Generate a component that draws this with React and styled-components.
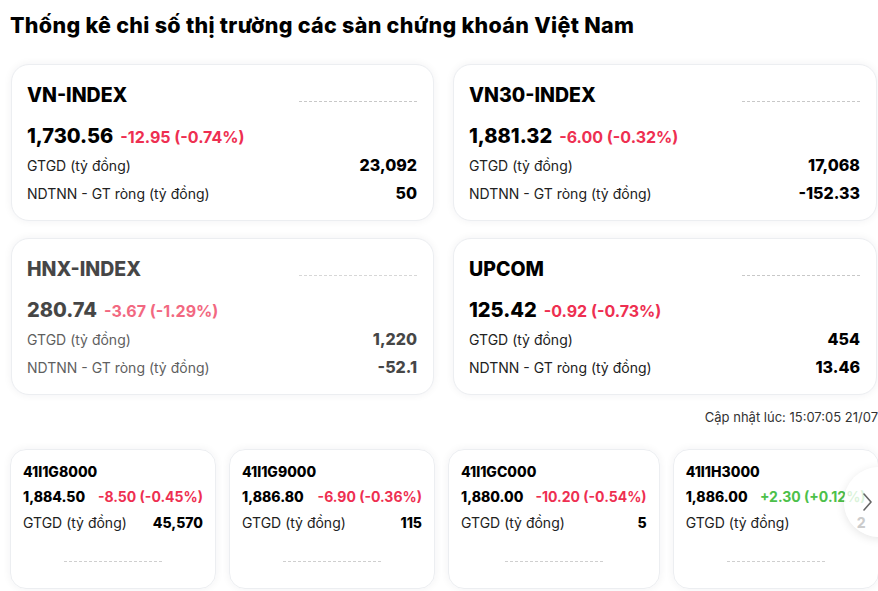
import React from 'react';
import styled, { createGlobalStyle } from 'styled-components';

const GlobalStyle = createGlobalStyle`
  body {
    margin: 0;
    background: #fff;
    font-family: Inter, "Noto Sans", sans-serif;
    color: #111;
  }
`;

const indexes = [
  { name: 'VN-INDEX', price: '1,730.56', change: '-12.95 (-0.74%)', gtgd: '23,092', ndtnn: '50' },
  { name: 'VN30-INDEX', price: '1,881.32', change: '-6.00 (-0.32%)', gtgd: '17,068', ndtnn: '-152.33' },
  { name: 'HNX-INDEX', price: '280.74', change: '-3.67 (-1.29%)', gtgd: '1,220', ndtnn: '-52.1', faded: true },
  { name: 'UPCOM', price: '125.42', change: '-0.92 (-0.73%)', gtgd: '454', ndtnn: '13.46' },
];

const futures = [
  { code: '41I1G8000', price: '1,884.50', change: '-8.50 (-0.45%)', gtgd: '45,570' },
  { code: '41I1G9000', price: '1,886.80', change: '-6.90 (-0.36%)', gtgd: '115' },
  { code: '41I1GC000', price: '1,880.00', change: '-10.20 (-0.54%)', gtgd: '5' },
  { code: '41I1H3000', price: '1,886.00', change: '+2.30 (+0.12%)', gtgd: '2', up: true },
];

export default function App() {
  return (
    <Page>
      <GlobalStyle />
      <Title>Thống kê chi số thị trường các sàn chứng khoán Việt Nam</Title>

      <IndexGrid>
        {indexes.map((item) => (
          <IndexCard key={item.name}>
            <CardBody $faded={item.faded}>
              <CardHead>
                <IndexName>{item.name}</IndexName>
                <Dashes />
              </CardHead>
              <PriceRow>
                <Price>{item.price}</Price>
                <Change>{item.change}</Change>
              </PriceRow>
              <StatRow>
                <Label>GTGD (tỷ đồng)</Label>
                <Value>{item.gtgd}</Value>
              </StatRow>
              <StatRow>
                <Label>NDTNN - GT ròng (tỷ đồng)</Label>
                <Value>{item.ndtnn}</Value>
              </StatRow>
            </CardBody>
          </IndexCard>
        ))}
      </IndexGrid>

      <Updated>Cập nhật lúc: 15:07:05 21/07</Updated>

      <Slider>
        <Track>
          {futures.map((f) => (
            <FutureCard key={f.code}>
              <Code>{f.code}</Code>
              <FutureRow>
                <FuturePrice>{f.price}</FuturePrice>
                <FutureChange $up={f.up}>{f.change}</FutureChange>
              </FutureRow>
              <FutureStat>
                <span>GTGD (tỷ đồng)</span>
                <b>{f.gtgd}</b>
              </FutureStat>
              <ShortDashes />
            </FutureCard>
          ))}
        </Track>
        <NextButton>
          <svg width="10" height="20" viewBox="0 0 10 20" fill="none">
            <path d="M2 2l7 8-7 8" stroke="#666" strokeWidth="1.6" strokeLinecap="round" strokeLinejoin="round" />
          </svg>
        </NextButton>
      </Slider>
    </Page>
  );
}

const Page = styled.div`
  width: 878px;
  padding: 12px 0 0 11px;
  box-sizing: border-box;
  overflow: hidden;
  height: 591px;
`;

const Title = styled.h1`
  margin: 0 0 26px -1px;
  font-size: 21.5px;
  font-weight: 800;
  line-height: 26px;
  color: #000;
  letter-spacing: 0.3px;
  white-space: nowrap;
`;

const IndexGrid = styled.div`
  display: grid;
  grid-template-columns: 423px 424px;
  column-gap: 19px;
  row-gap: 17px;
`;

const IndexCard = styled.div`
  height: 157px;
  border: 1px solid #eceef1;
  border-radius: 18px;
  box-shadow: 0 0 8px rgba(20, 30, 50, 0.06);
  background: #fff;
  box-sizing: border-box;
  padding: 16px 16px 0 15px;
`;

const CardBody = styled.div`
  opacity: ${(p) => (p.$faded ? 0.72 : 1)};
`;

const CardHead = styled.div`
  display: flex;
  justify-content: space-between;
  align-items: flex-end;
  height: 27px;
  margin-bottom: 16px;
`;

const IndexName = styled.div`
  font-size: 19.5px;
  font-weight: 800;
  line-height: 26px;
  color: #000;
`;

const Dashes = styled.div`
  width: 118px;
  border-top: 1px dashed #c8c8c8;
  margin-bottom: 6px;
`;

const PriceRow = styled.div`
  display: flex;
  align-items: baseline;
  gap: 7px;
  height: 27px;
`;

const Price = styled.span`
  font-size: 20px;
  font-weight: 800;
  color: #000;
`;

const Change = styled.span`
  font-size: 16px;
  font-weight: 700;
  color: #ee2f51;
`;

const StatRow = styled.div`
  display: flex;
  justify-content: space-between;
  align-items: center;
  height: 28px;
`;

const Label = styled.span`
  font-size: 14px;
  color: #222;
`;

const Value = styled.span`
  font-size: 16px;
  font-weight: 800;
  color: #000;
`;

const Updated = styled.div`
  text-align: right;
  font-size: 13px;
  color: #333;
  margin: 13px 0 0;
  line-height: 18px;
  white-space: nowrap;
`;

const Slider = styled.div`
  position: relative;
  margin-top: 23px;
  margin-left: -1px;
`;

const Track = styled.div`
  display: flex;
  gap: 13px;
`;

const FutureCard = styled.div`
  flex: 0 0 auto;
  min-width: 206px;
  height: 140px;
  box-sizing: border-box;
  border: 1px solid #eceef1;
  border-radius: 16px;
  box-shadow: 0 0 8px rgba(20, 30, 50, 0.06);
  padding: 12px 12px 0 12px;
  display: flex;
  flex-direction: column;
`;

const Code = styled.div`
  font-size: 14px;
  font-weight: 800;
  color: #000;
  line-height: 20px;
`;

const FutureRow = styled.div`
  display: flex;
  justify-content: space-between;
  gap: 12px;
  margin-top: 5px;
  line-height: 20px;
  font-size: 14px;
  font-weight: 700;
`;

const FuturePrice = styled.span`
  color: #000;
  font-weight: 800;
`;

const FutureChange = styled.span`
  color: ${(p) => (p.$up ? '#4cc04a' : '#ee2f51')};
`;

const FutureStat = styled.div`
  display: flex;
  justify-content: space-between;
  margin-top: 6px;
  line-height: 20px;
  font-size: 14px;
  color: #222;

  b {
    color: #000;
    font-weight: 800;
  }
`;

const ShortDashes = styled.div`
  width: 98px;
  margin: 28px auto 0;
  border-top: 1px dashed #cfcfcf;
`;

const NextButton = styled.div`
  position: absolute;
  left: 834px;
  top: 18px;
  width: 70px;
  height: 70px;
  border-radius: 50%;
  background: rgba(255, 255, 255, 0.8);
  box-shadow: 0 2px 10px rgba(0, 0, 0, 0.1);
  display: flex;
  align-items: center;
  padding-left: 18px;
  box-sizing: border-box;
`;
